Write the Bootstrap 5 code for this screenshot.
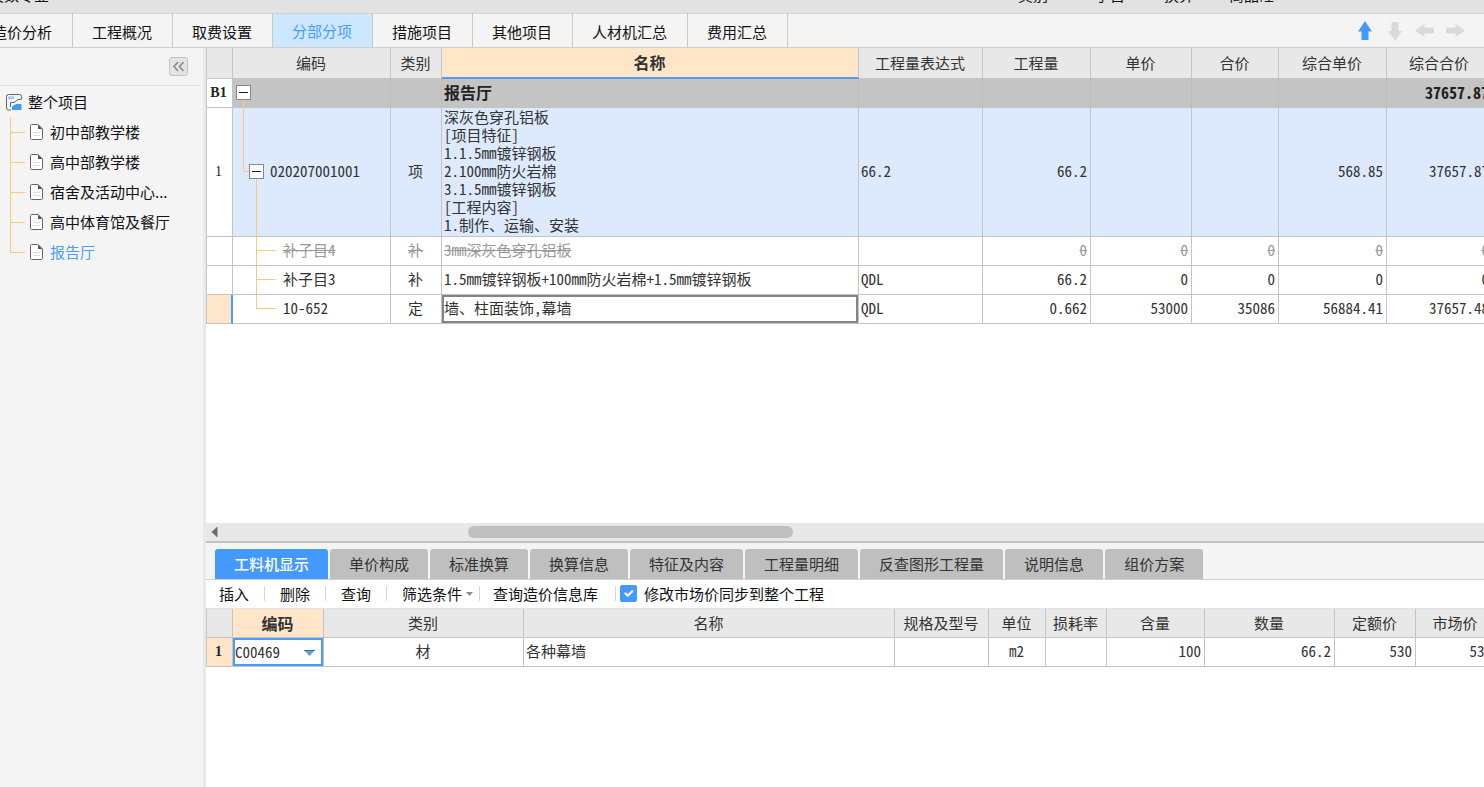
<!DOCTYPE html>
<html lang="zh-CN">
<head>
<meta charset="utf-8">
<meta name="viewport" content="width=device-width, initial-scale=1">
<title>分部分项</title>
<link href="https://cdn.jsdelivr.net/npm/bootstrap@5.3.0/dist/css/bootstrap.min.css" rel="stylesheet">
<style>
  body { font: 15px/20px "Noto Sans CJK SC", sans-serif; color: #111; background: #fff; }
  button, select, a { font: inherit; color: inherit; }
  .plain { background: none; border: 0; padding: 0; }

  .ribbon { height: 14px; background: #e2e2e2; border-bottom: 1px solid #d2d2d2; overflow: hidden; }
  .ribbon-text { line-height: 20px; margin-bottom: 8px; white-space: nowrap; }
  .ribbon-title { margin-left: -11px; }
  .ribbon-menu { gap: 35px; padding-right: 210px; }

  .tabbar { height: 34px; background: #f4f4f4; border-bottom: 1px solid #d0d0d0; }
  .tabbar .nav { margin-left: -27px; }
  .tabbar .nav-link { padding: 8px 21px 5px 19px; line-height: 20px; color: #111; box-shadow: inset -1px 0 #c8c8c8; }
  .tabbar .nav-link.active { background: #cce7ff; color: #4a9cff; padding-top: 7px; padding-bottom: 6px; }
  .arrows { gap: 10px; padding-right: 19px; }

  .sidebar { width: 206px; background: #f4f4f4; border-right: 3px solid #e9e9e9; }
  .side-head { height: 38px; margin-right: 3px; padding-right: 12px; border-bottom: 1px solid #e2e2e2; }
  .collapse-btn { width: 19px; height: 19px; background: #e4e4e4; border: 1px solid #c4c4c4; border-radius: 3px; }
  .tree a { text-decoration: none; color: #111; height: 30px; }
  .tree .root { padding-left: 6px; gap: 6px; margin-top: 1px; }
  .branch li { position: relative; padding-left: 30px; }
  .branch a { gap: 7px; }
  .branch li::before { content: ""; position: absolute; left: 10px; top: 0; bottom: 0; width: 1px; background: #ffc67c; }
  .branch li:last-child::before { bottom: 50%; }
  .branch li::after { content: ""; position: absolute; left: 10px; top: 50%; width: 15px; height: 1px; background: #ffc67c; }
  .branch a.current { color: #4a9cff; }

  .pane-top { flex: 1 1 0; }
  .pane-bottom { flex: 0 0 calc(100% / 3); border-top: 2px solid #c0c0c0; }

  .grid { table-layout: fixed; border-collapse: separate; border-spacing: 0; color: #333; font-family: "Noto Sans Mono CJK SC", "Noto Sans CJK SC", monospace; }
  .grid-main { width: calc(100% + 9px); }
  .grid-detail { width: calc(100% + 12px); }
  .grid th, .grid td { height: 29px; padding: 0 3px 2px 2px; line-height: 18px; border-right: 1px solid #c4c4c4; border-bottom: 1px solid #c4c4c4; white-space: nowrap; vertical-align: middle; }
  .grid thead th { background: #e8e8e8; font-weight: 400; text-align: center; font-family: "Noto Sans CJK SC", sans-serif; padding-bottom: 0; }
  .grid-main thead th { height: 31px; }
  .grid thead th.hot { background: #ffe6c8; font-weight: 700; font-size: 16px; }
  .grid-main thead th.hot { border-bottom: 2px solid #4a9cff; padding-bottom: 2px; }
  .grid tbody th { font: 14px/18px "Liberation Serif", serif; text-align: center; color: #222; background: #fff; padding: 0 2px 0 0; border-left: 1px solid #c4c4c4; }
  .grid thead th:first-child { border-left: 1px solid #c4c4c4; }
  .grid .num { text-align: right; }
  .grid .section td { background: #c4c4c4; border-right-color: #bcbcbc; font-weight: 700; font-size: 16px; color: #222; }
  .grid .item td { background: #dde9fd; height: 129px; }
  .grid .void td { color: #999; text-decoration: line-through; }
  .grid tbody .hot-row { background: #ffe6c8; }
  .grid-main tbody .hot-row { border-right: 2px solid #4a9cff; }
  .grid td.editing { box-shadow: inset 0 0 0 2px #858585; }

  .grid td.node { position: relative; padding-left: 3px; }
  .grid td.node-child { padding-left: 50px; }
  .node-body { padding-left: 13px; gap: 6px; }
  .toggle { width: 15px; height: 15px; border: 1px solid #888; background: #fff; display: block; position: relative; z-index: 1; padding: 0; }
  .toggle::before { content: ""; position: absolute; left: 2px; right: 2px; top: 6px; height: 1px; background: #222; }
  .wire { position: absolute; border: 0 solid #ffc67c; }
  .wire-root { left: 10px; top: 50%; bottom: 0; border-left-width: 1px; }
  .wire-in { left: 10px; top: 0; height: 50%; width: 8px; border-left-width: 1px; border-bottom-width: 1px; }
  .wire-down { left: 23px; top: 50%; bottom: 0; border-left-width: 1px; }
  .wire-pass { left: 23px; top: 0; bottom: 0; border-left-width: 1px; }
  .wire-leaf { left: 23px; top: 0; height: 50%; width: 20px; border-left-width: 1px; border-bottom-width: 1px; }

  .hscroll { height: 18px; background: #e8e8e8; padding-left: 5px; }
  .hscroll-track { padding-left: 19.6%; }
  .hscroll-thumb { width: 325px; height: 12px; border-radius: 6px; background: #bfbfbf; }

  .subtabs { height: 37px; background: #f4f4f4; border-bottom: 1px solid #d0d0d0; gap: 2px; padding-left: 9px; }
  .subtabs .nav-link { height: 30px; padding: 5px 19px; line-height: 20px; background: #bfbfbf; color: #333; border-radius: 3px 3px 0 0; }
  .subtabs .nav-link.active { background: #4499ff; color: #fff; font-weight: 500; }

  .tools { height: 28px; white-space: nowrap; }
  .tools .plain { padding: 0 15px; line-height: 20px; }
  .tools .plain:first-child { padding-left: 13px; }
  .tools .drop { padding-right: 6px; }
  .tools .drop + .vr-line + .plain { padding: 0 17px 0 13px; }
  .tools .vr-line { width: 1px; height: 15px; background: #cfd8dc; }
  .tools .form-check-input { width: 17px; height: 17px; margin: 0 7px 0 4px; border-radius: 2px; }
  .tools .form-check-input:checked { background-color: #4499ff; border-color: #4499ff; }

  .grid td.picker { padding: 0; box-shadow: inset 0 0 0 2px #4a9cff; }
  .picker-wrap { position: relative; margin: 2px; }
  .picker select { appearance: none; border: 0; background: none; width: 100%; height: 24px; padding: 0; font: inherit; color: #333; }
  .picker svg { position: absolute; right: 6px; top: 10px; pointer-events: none; }
</style>
</head>
<body>
<div class="d-flex flex-column vh-100 overflow-hidden">
  <header class="ribbon d-flex align-items-end justify-content-between flex-shrink-0">
    <span class="ribbon-text ribbon-title">装数专业</span>
    <div class="ribbon-menu d-flex">
      <span class="ribbon-text me-1">类别</span><span class="ribbon-text ms-2">子目</span><span class="ribbon-text ms-1">换算</span><span class="ribbon-text">商品砼</span>
    </div>
  </header>

  <div class="tabbar d-flex justify-content-between flex-shrink-0">
    <nav class="nav flex-nowrap text-nowrap">
      <a class="nav-link" href="#">造价分析</a>
      <a class="nav-link" href="#">工程概况</a>
      <a class="nav-link" href="#">取费设置</a>
      <a class="nav-link active" href="#">分部分项</a>
      <a class="nav-link" href="#">措施项目</a>
      <a class="nav-link" href="#">其他项目</a>
      <a class="nav-link" href="#">人材机汇总</a>
      <a class="nav-link" href="#">费用汇总</a>
    </nav>
    <div class="arrows d-flex align-items-center">
      <button class="plain d-flex" aria-label="上移"><svg width="20" height="20" viewBox="0 0 20 20"><path d="M10 0 17 10.500H13.500V19H6.500V10.500H3Z" fill="#4499ff"/></svg></button>
      <button class="plain d-flex" aria-label="下移"><svg width="20" height="20" viewBox="0 0 20 20"><path d="M10 20 17 10H13.500V1H6.500V10H3Z" fill="#dadada"/></svg></button>
      <button class="plain d-flex" aria-label="左移"><svg width="20" height="20" viewBox="0 0 20 20"><path d="M0 9.500 9.500 3V6.500H19V12.500H9.500V16Z" fill="#dadada"/></svg></button>
      <button class="plain d-flex" aria-label="右移"><svg width="20" height="20" viewBox="0 0 20 20"><path d="M20 9.500 10.500 3V6.500H1V12.500H10.500V16Z" fill="#dadada"/></svg></button>
    </div>
  </div>

  <div class="d-flex flex-grow-1 overflow-hidden">
    <aside class="sidebar flex-shrink-0">
      <div class="side-head d-flex align-items-center justify-content-end">
        <button class="collapse-btn p-0 d-flex align-items-center justify-content-center" aria-label="收起"><svg width="13" height="11" viewBox="0 0 13 11"><path d="M6 1 2 5.500 6 10M11.500 1 7.500 5.500 11.500 10" fill="none" stroke="#888" stroke-width="1.500"/></svg></button>
      </div>
      <nav class="tree">
        <a class="root d-flex align-items-center" href="#">
          <svg width="16" height="17" viewBox="0 0 16 17"><path d="M15.500 5V2.500Q15.500 .5 13.500 .5H2.500Q.5 .5 .5 2.500V14Q.5 16 2.500 16H5" fill="none" stroke="#666"/><path d="M2 2.500H8V5H2Z" fill="#9cc8ff"/><path d="M4.500 13V8.500H8L12 5.500H15.500" fill="none" stroke="#666"/><path d="M6 16V12.500L10 10H15.500V16Z" fill="#4499ff"/></svg>
          整个项目</a>
        <ul class="branch list-unstyled m-0">
          <li><a class="d-flex align-items-center" href="#"><svg width="13" height="16" viewBox="0 0 13 16"><use href="#doc"/></svg>初中部教学楼</a></li>
          <li><a class="d-flex align-items-center" href="#"><svg width="13" height="16" viewBox="0 0 13 16"><use href="#doc"/></svg>高中部教学楼</a></li>
          <li><a class="d-flex align-items-center" href="#"><svg width="13" height="16" viewBox="0 0 13 16"><use href="#doc"/></svg>宿舍及活动中心...</a></li>
          <li><a class="d-flex align-items-center" href="#"><svg width="13" height="16" viewBox="0 0 13 16"><use href="#doc"/></svg>高中体育馆及餐厅</a></li>
          <li><a class="current d-flex align-items-center" href="#"><svg width="13" height="16" viewBox="0 0 13 16"><use href="#doc"/></svg>报告厅</a></li>
        </ul>
      </nav>
      <svg class="d-none"><defs><g id="doc"><path d="M1.500 .5H8L12.500 5V14.500Q12.500 15.500 11.500 15.500H1.500Q.5 15.500 .5 14.500V1.500Q.5 .5 1.500 .5Z" fill="#fff" stroke="#666"/><path d="M8 .5V5H12.500Z" fill="#555"/><path d="M3 8.500H10M3 11.500H10" stroke="#ddd"/></g></defs></svg>
    </aside>

    <main class="d-flex flex-column flex-grow-1 overflow-hidden">
      <section class="pane-top d-flex flex-column overflow-hidden">
        <div class="flex-grow-1 overflow-hidden">
          <table class="grid grid-main">
            <colgroup><col style="width:27px"><col style="width:158px"><col style="width:51px"><col><col style="width:124px"><col style="width:108px"><col style="width:101px"><col style="width:87px"><col style="width:108px"><col style="width:106px"></colgroup>
            <thead><tr><th></th><th>编码</th><th>类别</th><th class="hot">名称</th><th>工程量表达式</th><th>工程量</th><th>单价</th><th>合价</th><th>综合单价</th><th>综合合价</th></tr></thead>
            <tbody>
              <tr class="section"><th class="fw-bold">B1</th><td class="node"><i class="wire wire-root"></i><button class="toggle" aria-label="折叠"></button></td><td></td><td>报告厅</td><td></td><td></td><td></td><td></td><td></td><td class="num">37657.87</td></tr>
              <tr class="item"><th>1</th><td class="node"><i class="wire wire-in"></i><i class="wire wire-down"></i><div class="node-body d-flex align-items-center"><button class="toggle" aria-label="折叠"></button>020207001001</div></td><td class="text-center">项</td><td>深灰色穿孔铝板<br>[项目特征]<br>1.1.5mm镀锌钢板<br>2.100mm防火岩棉<br>3.1.5mm镀锌钢板<br>[工程内容]<br>1.制作、运输、安装</td><td>66.2</td><td class="num">66.2</td><td></td><td></td><td class="num">568.85</td><td class="num">37657.87</td></tr>
              <tr class="void"><th></th><td class="node node-child"><i class="wire wire-pass"></i><i class="wire wire-leaf"></i>补子目4</td><td class="text-center">补</td><td>3mm深灰色穿孔铝板</td><td></td><td class="num">0</td><td class="num">0</td><td class="num">0</td><td class="num">0</td><td class="num">0</td></tr>
              <tr><th></th><td class="node node-child"><i class="wire wire-pass"></i><i class="wire wire-leaf"></i>补子目3</td><td class="text-center">补</td><td>1.5mm镀锌钢板+100mm防火岩棉+1.5mm镀锌钢板</td><td>QDL</td><td class="num">66.2</td><td class="num">0</td><td class="num">0</td><td class="num">0</td><td class="num">0</td></tr>
              <tr><th class="hot-row"></th><td class="node node-child"><i class="wire wire-leaf"></i>10-652</td><td class="text-center">定</td><td class="editing">墙、柱面装饰,幕墙</td><td>QDL</td><td class="num">0.662</td><td class="num">53000</td><td class="num">35086</td><td class="num">56884.41</td><td class="num">37657.48</td></tr>
            </tbody>
          </table>
        </div>
        <div class="hscroll d-flex align-items-center flex-shrink-0">
          <button class="plain d-flex" aria-label="向左滚动"><svg width="7" height="12" viewBox="0 0 7 12"><path d="M6.500 .5V11.500L.5 6Z" fill="#6c6c74"/></svg></button>
          <div class="hscroll-track flex-grow-1"><div class="hscroll-thumb"></div></div>
        </div>
      </section>

      <section class="pane-bottom overflow-hidden">
        <nav class="subtabs nav flex-nowrap align-items-end text-nowrap">
          <a class="nav-link active" href="#">工料机显示</a>
          <a class="nav-link" href="#">单价构成</a>
          <a class="nav-link" href="#">标准换算</a>
          <a class="nav-link" href="#">换算信息</a>
          <a class="nav-link" href="#">特征及内容</a>
          <a class="nav-link" href="#">工程量明细</a>
          <a class="nav-link" href="#">反查图形工程量</a>
          <a class="nav-link" href="#">说明信息</a>
          <a class="nav-link" href="#">组价方案</a>
        </nav>
        <div class="tools d-flex align-items-center">
          <button class="plain">插入</button><span class="vr-line"></span>
          <button class="plain">删除</button><span class="vr-line"></span>
          <button class="plain">查询</button><span class="vr-line"></span>
          <button class="plain drop d-flex align-items-center">筛选条件<svg class="ms-1" width="7" height="4" viewBox="0 0 7 4"><path d="M0 0H7L3.500 4Z" fill="#888"/></svg></button><span class="vr-line"></span>
          <button class="plain">查询造价信息库</button><span class="vr-line"></span>
          <input class="form-check-input" type="checkbox" id="sync" checked><label for="sync">修改市场价同步到整个工程</label>
        </div>
        <table class="grid grid-detail border-top">
          <colgroup><col style="width:27px"><col style="width:91px"><col style="width:200px"><col><col style="width:94px"><col style="width:57px"><col style="width:61px"><col style="width:98px"><col style="width:130px"><col style="width:81px"><col style="width:80px"></colgroup>
          <thead><tr><th></th><th class="hot">编码</th><th>类别</th><th>名称</th><th>规格及型号</th><th>单位</th><th>损耗率</th><th>含量</th><th>数量</th><th>定额价</th><th>市场价</th></tr></thead>
          <tbody><tr><th class="hot-row fw-bold">1</th><td class="picker"><div class="picker-wrap"><select aria-label="编码"><option>C00469</option></select><svg width="11" height="6" viewBox="0 0 11 6"><path d="M0 0H11L5.500 6Z" fill="#5ea3d0"/><path d="M0 .5H11" stroke="#38719c"/></svg></div></td><td class="text-center">材</td><td>各种幕墙</td><td></td><td class="text-center">m2</td><td></td><td class="num">100</td><td class="num">66.2</td><td class="num">530</td><td class="num">530</td></tr></tbody>
        </table>
      </section>
    </main>
  </div>
</div>
<script src="https://cdn.jsdelivr.net/npm/bootstrap@5.3.0/dist/js/bootstrap.bundle.min.js"></script>
</body>
</html>
